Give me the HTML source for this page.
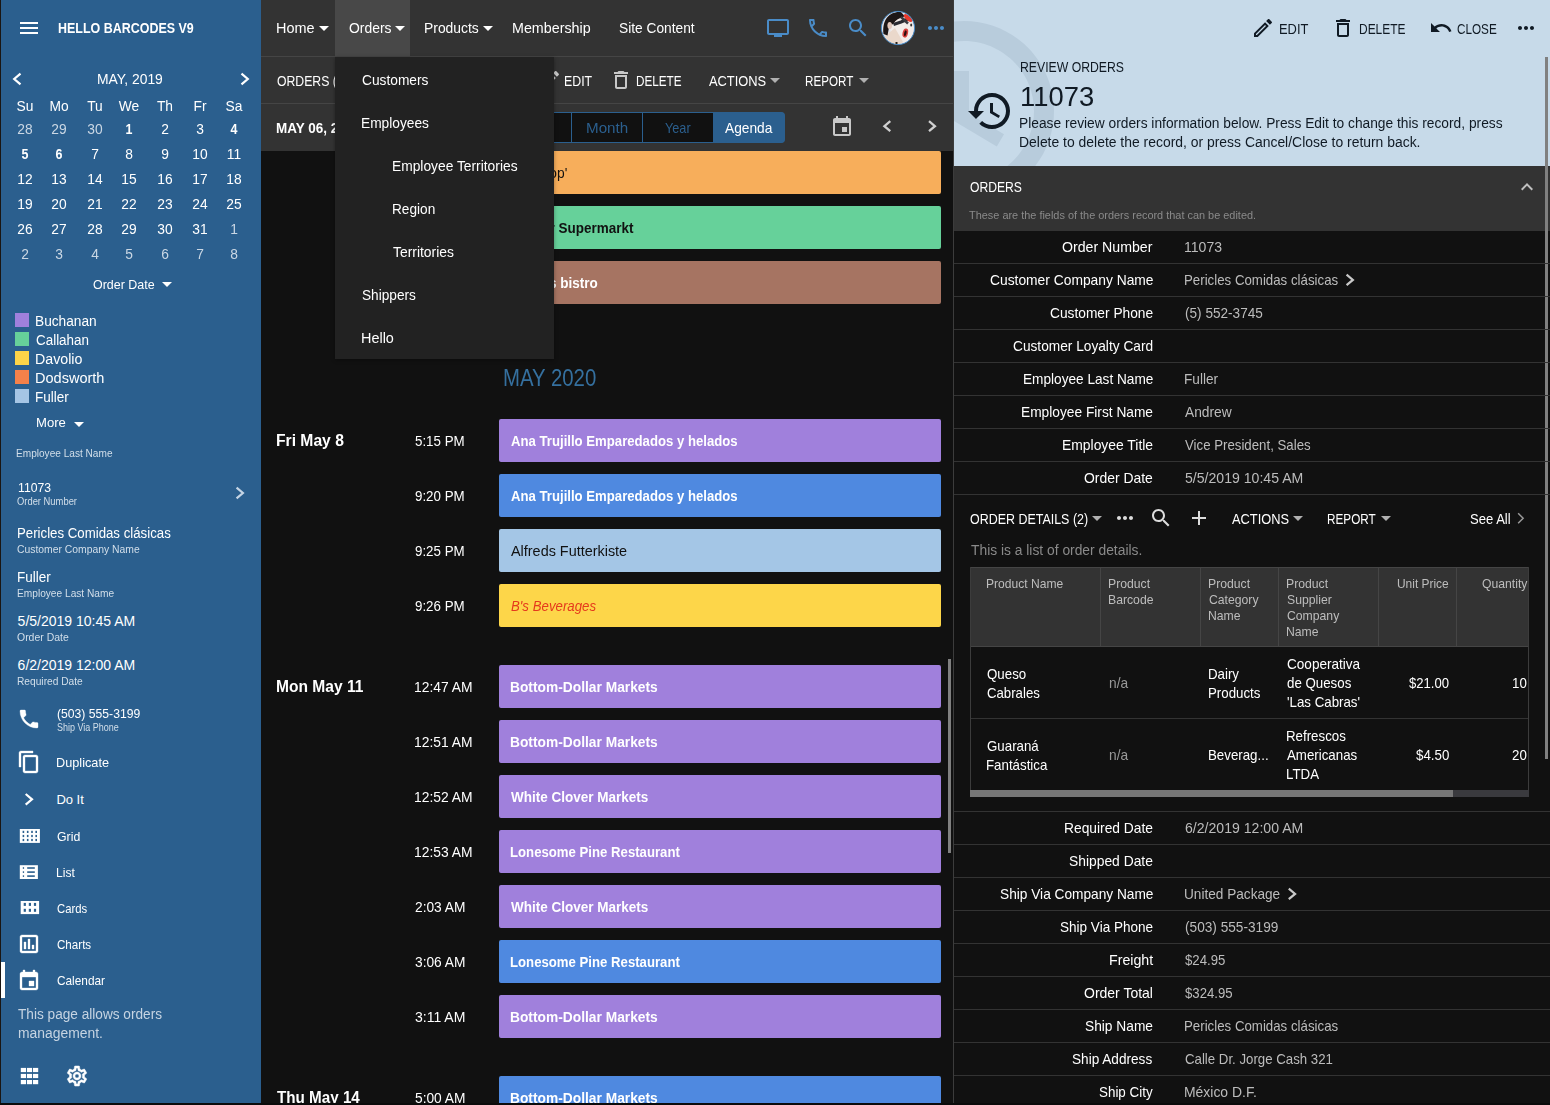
<!DOCTYPE html><html><head><meta charset="utf-8"><title>Orders</title><style>
html,body{margin:0;padding:0}
body{width:1550px;height:1105px;overflow:hidden;background:#111;position:relative;font-family:"Liberation Sans",sans-serif}
#r{position:absolute;left:0;top:0;width:1550px;height:1105px;overflow:hidden}
#r div,#r svg,#r span{position:absolute}
#r span{white-space:nowrap;line-height:20px}

</style></head><body><div id="r">
<div style="left:0px;top:0px;width:1px;height:1105px;background:#1a1512;"></div>
<div style="left:1px;top:0px;width:260px;height:1105px;background:#2b5f8e;"></div>
<div style="left:261px;top:0px;width:693px;height:151px;background:#333;"></div>
<div style="left:261px;top:56px;width:692px;height:1px;background:#454545;"></div>
<div style="left:261px;top:103px;width:692px;height:1px;background:#454545;"></div>
<div style="left:261px;top:151px;width:693px;height:954px;background:#111;"></div>
<div style="left:953px;top:0px;width:1px;height:1105px;background:#3c3c3c;"></div>
<svg style="left:17px;top:16px;" width="24" height="24" viewBox="0 0 24 24"><path fill="#fff" d="M3 18h18v-2H3v2zm0-5h18v-2H3v2zm0-7v2h18V6H3z"/></svg>
<svg style="left:9px;top:70px" width="18" height="17"><polyline points="11.51,3.70 5.21,9.00 11.51,14.30" fill="none" stroke="#fff" stroke-width="2.2" stroke-linejoin="miter"/></svg>
<svg style="left:238px;top:70px" width="18" height="17"><polyline points="3.49,3.70 9.79,9.00 3.49,14.30" fill="none" stroke="#fff" stroke-width="2.2" stroke-linejoin="miter"/></svg>
<svg style="left:155px;top:272px;" width="24" height="24" viewBox="0 0 24 24"><path fill="#fff" d="M7 10l5 5 5-5z"/></svg>
<div style="left:15px;top:313px;width:14px;height:14px;background:#a080dc;"></div>
<div style="left:15px;top:332px;width:14px;height:14px;background:#66d09a;"></div>
<div style="left:15px;top:351px;width:14px;height:14px;background:#fdd448;"></div>
<div style="left:15px;top:370px;width:14px;height:14px;background:#f4814a;"></div>
<div style="left:15px;top:389px;width:14px;height:14px;background:#a5c5e5;"></div>
<svg style="left:66.8px;top:412px;" width="24" height="24" viewBox="0 0 24 24"><path fill="#fff" d="M7 10l5 5 5-5z"/></svg>
<svg style="left:233px;top:484px" width="18" height="17"><polyline points="3.59,3.70 9.89,9.00 3.59,14.30" fill="none" stroke="#c5d5e5" stroke-width="2.2" stroke-linejoin="miter"/></svg>
<svg style="left:17px;top:707px;stroke:#fff;stroke-width:0.35px" width="24" height="24" viewBox="0 0 24 24"><path fill="#fff" d="M6.62 10.79c1.44 2.83 3.76 5.14 6.59 6.59l2.2-2.2c.27-.27.67-.36 1.02-.24 1.12.37 2.33.57 3.57.57.55 0 1 .45 1 1V20c0 .55-.45 1-1 1-9.39 0-17-7.61-17-17 0-.55.45-1 1-1h3.5c.55 0 1 .45 1 1 0 1.25.2 2.45.57 3.57.11.35.03.74-.25 1.02l-2.2 2.2z"/></svg>
<svg style="left:17px;top:750px;stroke:#fff;stroke-width:0.35px" width="24" height="24" viewBox="0 0 24 24"><path fill="#fff" d="M16 1H4c-1.1 0-2 .9-2 2v14h2V3h12V1zm3 4H8c-1.1 0-2 .9-2 2v14c0 1.1.9 2 2 2h11c1.1 0 2-.9 2-2V7c0-1.1-.9-2-2-2zm0 16H8V7h11v14z"/></svg>
<svg style="left:22px;top:791px" width="18" height="17"><polyline points="3.69,3.00 9.99,8.30 3.69,13.60" fill="none" stroke="#fff" stroke-width="2.2" stroke-linejoin="miter"/></svg>
<svg style="left:19px;top:828px" width="24" height="18"><rect x="0.8" y="1" width="20.1" height="13.9" fill="#fff"/><rect x="3.6" y="2.8" width="1.6" height="2.2" fill="#2b5f8e"/><rect x="3.6" y="6.9" width="1.6" height="2.2" fill="#2b5f8e"/><rect x="3.6" y="10.9" width="1.6" height="2.2" fill="#2b5f8e"/><rect x="7.9" y="2.8" width="1.6" height="2.2" fill="#2b5f8e"/><rect x="7.9" y="6.9" width="1.6" height="2.2" fill="#2b5f8e"/><rect x="7.9" y="10.9" width="1.6" height="2.2" fill="#2b5f8e"/><rect x="12.2" y="2.8" width="1.6" height="2.2" fill="#2b5f8e"/><rect x="12.2" y="6.9" width="1.6" height="2.2" fill="#2b5f8e"/><rect x="12.2" y="10.9" width="1.6" height="2.2" fill="#2b5f8e"/><rect x="16.4" y="2.8" width="1.6" height="2.2" fill="#2b5f8e"/><rect x="16.4" y="6.9" width="1.6" height="2.2" fill="#2b5f8e"/><rect x="16.4" y="10.9" width="1.6" height="2.2" fill="#2b5f8e"/></svg>
<svg style="left:19px;top:864px" width="24" height="18"><rect x="0.8" y="1.2" width="18.1" height="13.8" fill="#fff"/><rect x="3.8" y="3.2" width="1.3" height="1.6" fill="#2b5f8e"/><rect x="8.2" y="3.2" width="7.6" height="1.6" fill="#2b5f8e"/><rect x="3.8" y="7.3" width="1.3" height="1.6" fill="#2b5f8e"/><rect x="8.2" y="7.3" width="7.6" height="1.6" fill="#2b5f8e"/><rect x="3.8" y="11.3" width="1.3" height="1.6" fill="#2b5f8e"/><rect x="8.2" y="11.3" width="7.6" height="1.6" fill="#2b5f8e"/></svg>
<svg style="left:19px;top:899px" width="24" height="18"><rect x="1.7" y="2" width="18.4" height="13.1" fill="#fff"/><rect x="4.7" y="3.9" width="2.2" height="3" fill="#2b5f8e"/><rect x="4.7" y="9.8" width="2.2" height="3" fill="#2b5f8e"/><rect x="9.8" y="3.9" width="2.2" height="3" fill="#2b5f8e"/><rect x="9.8" y="9.8" width="2.2" height="3" fill="#2b5f8e"/><rect x="14.9" y="3.9" width="2.2" height="3" fill="#2b5f8e"/><rect x="14.9" y="9.8" width="2.2" height="3" fill="#2b5f8e"/></svg>
<svg style="left:17px;top:932px;stroke:#fff;stroke-width:0.35px" width="24" height="24" viewBox="0 0 24 24"><path fill="#fff" d="M19 3H5c-1.1 0-2 .9-2 2v14c0 1.1.9 2 2 2h14c1.1 0 2-.9 2-2V5c0-1.1-.9-2-2-2zm0 16H5V5h14v14zM7 10h2v7H7zm4-3h2v10h-2zm4 6h2v4h-2z"/></svg>
<svg style="left:17px;top:969px;stroke:#fff;stroke-width:0.35px" width="24" height="24" viewBox="0 0 24 24"><path fill="#fff" d="M17 12h-5v5h5v-5zM16 1v2H8V1H6v2H5c-1.11 0-1.99.9-1.99 2L3 19c0 1.1.89 2 2 2h14c1.1 0 2-.9 2-2V5c0-1.1-.9-2-2-2h-1V1h-2zm3 18H5V8h14v11z"/></svg>
<div style="left:1px;top:962px;width:4px;height:36px;background:#fff;"></div>
<svg style="left:18px;top:1065px" width="24" height="22"><rect x="2.8" y="2.9" width="5.2" height="4.2" fill="#fff"/><rect x="2.8" y="8.9" width="5.2" height="4.2" fill="#fff"/><rect x="2.8" y="15.0" width="5.2" height="4.2" fill="#fff"/><rect x="8.9" y="2.9" width="5.2" height="4.2" fill="#fff"/><rect x="8.9" y="8.9" width="5.2" height="4.2" fill="#fff"/><rect x="8.9" y="15.0" width="5.2" height="4.2" fill="#fff"/><rect x="15.0" y="2.9" width="5.2" height="4.2" fill="#fff"/><rect x="15.0" y="8.9" width="5.2" height="4.2" fill="#fff"/><rect x="15.0" y="15.0" width="5.2" height="4.2" fill="#fff"/></svg>
<svg style="left:65px;top:1064px;stroke:#fff;stroke-width:0.5px" width="24" height="24" viewBox="0 0 24 24"><path fill="#fff" d="M19.43 12.98c.04-.32.07-.64.07-.98 0-.34-.03-.66-.07-.98l2.11-1.65c.19-.15.24-.42.12-.64l-2-3.46c-.09-.16-.26-.25-.44-.25-.06 0-.12.01-.17.03l-2.49 1c-.52-.4-1.08-.73-1.69-.98l-.38-2.65C14.46 2.18 14.25 2 14 2h-4c-.25 0-.46.18-.49.42l-.38 2.65c-.61.25-1.17.59-1.69.98l-2.49-1c-.06-.02-.12-.03-.18-.03-.17 0-.34.09-.43.25l-2 3.46c-.13.22-.07.49.12.64l2.11 1.65c-.04.32-.07.65-.07.98 0 .33.03.66.07.98l-2.11 1.65c-.19.15-.24.42-.12.64l2 3.46c.09.16.26.25.44.25.06 0 .12-.01.17-.03l2.49-1c.52.4 1.08.73 1.69.98l.38 2.65c.03.24.24.42.49.42h4c.25 0 .46-.18.49-.42l.38-2.65c.61-.25 1.17-.59 1.69-.98l2.49 1c.06.02.12.03.18.03.17 0 .34-.09.43-.25l2-3.46c.12-.22.07-.49-.12-.64l-2.11-1.65zm-1.98-1.71c.04.31.05.52.05.73 0 .21-.02.43-.05.73l-.14 1.13.89.7 1.08.84-.7 1.21-1.27-.51-1.04-.42-.9.68c-.43.32-.84.56-1.25.73l-1.06.43-.16 1.13-.2 1.35h-1.4l-.19-1.35-.16-1.13-1.06-.43c-.43-.18-.83-.41-1.23-.71l-.91-.7-1.06.43-1.27.51-.7-1.21 1.08-.84.89-.7-.14-1.13c-.03-.31-.05-.54-.05-.74s.02-.43.05-.73l.14-1.13-.89-.7-1.08-.84.7-1.21 1.27.51 1.04.42.9-.68c.43-.32.84-.56 1.25-.73l1.06-.43.16-1.13.2-1.35h1.39l.19 1.35.16 1.13 1.06.43c.43.18.83.41 1.23.71l.91.7 1.06-.43 1.27-.51.7 1.21-1.07.85-.89.7.14 1.13zM12 8c-2.21 0-4 1.79-4 4s1.79 4 4 4 4-1.79 4-4-1.79-4-4-4zm0 6c-1.1 0-2-.9-2-2s.9-2 2-2 2 .9 2 2-.9 2-2 2z"/></svg>
<div style="left:335px;top:0px;width:75px;height:56px;background:#484848;"></div>
<svg style="left:312px;top:16px;" width="24" height="24" viewBox="0 0 24 24"><path fill="#fff" d="M7 10l5 5 5-5z"/></svg>
<svg style="left:387.8px;top:16px;" width="24" height="24" viewBox="0 0 24 24"><path fill="#fff" d="M7 10l5 5 5-5z"/></svg>
<svg style="left:475.8px;top:16px;" width="24" height="24" viewBox="0 0 24 24"><path fill="#fff" d="M7 10l5 5 5-5z"/></svg>
<svg style="left:766px;top:16px;" width="24" height="24" viewBox="0 0 24 24"><path fill="#4a8cc8" d="M21 3H3c-1.1 0-2 .9-2 2v12c0 1.1.9 2 2 2h5v2h8v-2h5c1.1 0 1.99-.9 1.99-2L23 5c0-1.1-.9-2-2-2zm0 14H3V5h18v12z"/></svg>
<svg style="left:806px;top:16px;" width="24" height="24" viewBox="0 0 24 24"><path fill="#4a8cc8" d="M6.54 5c.06.89.21 1.76.45 2.59l-1.2 1.2c-.41-1.2-.67-2.47-.76-3.79h1.51m9.86 12.02c.85.24 1.72.39 2.6.45v1.49c-1.32-.09-2.59-.35-3.8-.75l1.2-1.19M7.5 3H4c-.55 0-1 .45-1 1 0 9.39 7.61 17 17 17 .55 0 1-.45 1-1v-3.49c0-.55-.45-1-1-1-1.24 0-2.45-.2-3.57-.57-.1-.04-.21-.05-.31-.05-.26 0-.51.1-.71.29l-2.2 2.2c-2.83-1.45-5.15-3.76-6.59-6.59l2.2-2.2c.28-.28.36-.67.25-1.02C8.7 6.45 8.5 5.25 8.5 4c0-.55-.45-1-1-1z"/></svg>
<svg style="left:846px;top:16px;" width="24" height="24" viewBox="0 0 24 24"><path fill="#4a8cc8" d="M15.5 14h-.79l-.28-.27C15.41 12.59 16 11.11 16 9.5 16 5.91 13.09 3 9.5 3S3 5.91 3 9.5 5.91 16 9.5 16c1.61 0 3.09-.59 4.23-1.57l.27.28v.79l5 4.99L20.49 19l-4.99-5zm-6 0C7.01 14 5 11.99 5 9.5S7.01 5 9.5 5 14 7.01 14 9.5 11.99 14 9.5 14z"/></svg>
<svg style="left:880px;top:10px" width="36" height="36" viewBox="-1 -1 36 36"><defs><clipPath id="avc"><circle cx="17" cy="17" r="16.5"/></clipPath><filter id="avb" x="-10%" y="-10%" width="120%" height="120%"><feGaussianBlur stdDeviation="0.45"/></filter></defs><g clip-path="url(#avc)"><g filter="url(#avb)"><rect x="-1" y="-1" width="36" height="36" fill="#e3e4ea"/><ellipse cx="21" cy="18" rx="11.5" ry="13.5" fill="#f3ece9"/><path d="M4 25 L14 17 L22 31 L15 36 L5 32Z" fill="#ead8cb"/><path d="M2.500 23 C1 9 8 0 20 1 L24 5.500 C18 7 14.500 9 12.500 13 L9.500 14 C7.500 16 7.500 20 6.500 24.500 Z" fill="#1d1412"/><ellipse cx="8.700" cy="14.500" rx="2.300" ry="3.600" fill="#e2c8bc"/><path d="M12.500 13.500 L20 11 L27 8" stroke="#2b2b30" stroke-width="3.200" fill="none"/><path d="M20 6 L27 12.500" stroke="#3a3a40" stroke-width="2.400" fill="none"/><ellipse cx="27" cy="7" rx="5.200" ry="2.300" transform="rotate(42 27 7)" fill="#e73a2d"/><ellipse cx="30.200" cy="14" rx="1" ry="1.500" fill="#333"/><ellipse cx="24.300" cy="22" rx="2.700" ry="4.600" transform="rotate(14 24.300 22)" fill="#d8403c"/><ellipse cx="24.300" cy="22.300" rx="1.200" ry="3" transform="rotate(14 24.300 22.300)" fill="#2a1010"/><rect x="14.500" y="31" width="2" height="4" fill="#2a2018"/></g></g><circle cx="17" cy="17" r="16.600" fill="none" stroke="#4a8cc8" stroke-width="1"/></svg>
<svg style="left:924px;top:16px;" width="24" height="24" viewBox="0 0 24 24"><path fill="#4a8cc8" d="M6 10c-1.1 0-2 .9-2 2s.9 2 2 2 2-.9 2-2-.9-2-2-2zm12 0c-1.1 0-2 .9-2 2s.9 2 2 2 2-.9 2-2-.9-2-2-2zm-6 0c-1.1 0-2 .9-2 2s.9 2 2 2 2-.9 2-2-.9-2-2-2z"/></svg>
<svg style="left:537.9px;top:68.4px;" width="24" height="24" viewBox="0 0 24 24"><path fill="#c8c8c8" d="M14.06 9.02l.92.92L5.92 19H5v-.92l9.06-9.06M17.66 3c-.25 0-.51.1-.7.29l-1.83 1.83 3.75 3.75 1.83-1.83c.39-.39.39-1.02 0-1.41l-2.34-2.34c-.2-.2-.45-.29-.71-.29zm-3.6 3.190L3 17.25V21h3.75L17.81 9.94l-3.75-3.750z"/></svg>
<svg style="left:608.6px;top:68px;" width="24" height="24" viewBox="0 0 24 24"><path fill="#c8c8c8" d="M6 19c0 1.1.9 2 2 2h8c1.1 0 2-.9 2-2V7H6v12zM8 9h8v10H8V9zm7.5-5l-1-1h-5l-1 1H5v2h14V4z"/></svg>
<svg style="left:763.4px;top:68px;" width="24" height="24" viewBox="0 0 24 24"><path fill="#b0b0b0" d="M7 10l5 5 5-5z"/></svg>
<svg style="left:851.6px;top:68px;" width="24" height="24" viewBox="0 0 24 24"><path fill="#b0b0b0" d="M7 10l5 5 5-5z"/></svg>
<div style="left:429.5px;top:112px;width:355.5px;height:31px;box-sizing:border-box;border:1px solid #2b5f8e;border-radius:4px;background:#111"></div>
<div style="left:500px;top:112px;width:1px;height:31px;background:#2b5f8e;"></div>
<div style="left:571px;top:112px;width:1px;height:31px;background:#2b5f8e;"></div>
<div style="left:642px;top:112px;width:1px;height:31px;background:#2b5f8e;"></div>
<div style="left:713px;top:112px;width:72px;height:31px;background:#2b5f8e;border-radius:0 4px 4px 0"></div>
<svg style="left:829.6px;top:115px;" width="24" height="24" viewBox="0 0 24 24"><path fill="#c8c8c8" d="M17 12h-5v5h5v-5zM16 1v2H8V1H6v2H5c-1.11 0-1.99.9-1.99 2L3 19c0 1.1.89 2 2 2h14c1.1 0 2-.9 2-2V5c0-1.1-.9-2-2-2h-1V1h-2zm3 18H5V8h14v11z"/></svg>
<svg style="left:879px;top:118px" width="18" height="17"><polyline points="11.28,3.20 5.38,8.20 11.28,13.20" fill="none" stroke="#d0d0d0" stroke-width="2.3" stroke-linejoin="miter"/></svg>
<svg style="left:926px;top:118px" width="18" height="17"><polyline points="3.02,3.20 8.92,8.20 3.02,13.20" fill="none" stroke="#d0d0d0" stroke-width="2.3" stroke-linejoin="miter"/></svg>
<div style="left:499px;top:151px;width:442px;height:43px;background:#f7ae5b;border-radius:2px"></div>
<div style="left:499px;top:206px;width:442px;height:43px;background:#66d19a;border-radius:2px"></div>
<div style="left:499px;top:261px;width:442px;height:43px;background:#a67462;border-radius:2px"></div>
<div style="left:499px;top:419px;width:442px;height:43px;background:#a080dc;border-radius:2px"></div>
<div style="left:499px;top:474px;width:442px;height:43px;background:#4f89e0;border-radius:2px"></div>
<div style="left:499px;top:529px;width:442px;height:43px;background:#a4c6e6;border-radius:2px"></div>
<div style="left:499px;top:584px;width:442px;height:43px;background:#fdd649;border-radius:2px"></div>
<div style="left:499px;top:665px;width:442px;height:43px;background:#a080dc;border-radius:2px"></div>
<div style="left:499px;top:720px;width:442px;height:43px;background:#a080dc;border-radius:2px"></div>
<div style="left:499px;top:775px;width:442px;height:43px;background:#a080dc;border-radius:2px"></div>
<div style="left:499px;top:830px;width:442px;height:43px;background:#a080dc;border-radius:2px"></div>
<div style="left:499px;top:885px;width:442px;height:43px;background:#a080dc;border-radius:2px"></div>
<div style="left:499px;top:940px;width:442px;height:43px;background:#4f89e0;border-radius:2px"></div>
<div style="left:499px;top:995px;width:442px;height:43px;background:#a080dc;border-radius:2px"></div>
<div style="left:499px;top:1076px;width:442px;height:43px;background:#4f89e0;border-radius:2px"></div>
<div style="left:948px;top:659px;width:3px;height:194px;background:#808080;"></div>
<div style="left:954px;top:0;width:596px;height:166px;background:#c7dae9;overflow:hidden"><svg style="left:-120px;top:-9px" width="240" height="240" viewBox="0 0 24 24"><path fill="#b8ccdc" d="M13 3c-4.97 0-9 4.03-9 9H1l3.89 3.89.07.14L9 12H6c0-3.870 3.130-7 7-7s7 3.130 7 7-3.130 7-7 7c-1.930 0-3.680-.79-4.940-2.060l-1.420 1.420C8.270 19.990 10.510 21 13 21c4.970 0 9-4.030 9-9s-4.030-9-9-9zm-1 5v5l4.280 2.540.72-1.210-3.500-2.080V8H12z"/></svg></div>
<div style="left:954px;top:166px;width:596px;height:65px;background:#333;"></div>
<svg style="left:1250.6px;top:16px;" width="24" height="24" viewBox="0 0 24 24"><path fill="#101a24" d="M14.06 9.02l.92.92L5.92 19H5v-.92l9.06-9.06M17.66 3c-.25 0-.51.1-.7.29l-1.83 1.83 3.75 3.75 1.83-1.83c.39-.39.39-1.02 0-1.41l-2.34-2.34c-.2-.2-.45-.29-.71-.29zm-3.6 3.190L3 17.25V21h3.75L17.81 9.94l-3.75-3.750z"/></svg>
<svg style="left:1331.4px;top:16px;" width="24" height="24" viewBox="0 0 24 24"><path fill="#101a24" d="M6 19c0 1.1.9 2 2 2h8c1.1 0 2-.9 2-2V7H6v12zM8 9h8v10H8V9zm7.5-5l-1-1h-5l-1 1H5v2h14V4z"/></svg>
<svg style="left:1428.6px;top:16.2px;" width="24" height="24" viewBox="0 0 24 24"><path fill="#101a24" d="M12.5 8c-2.65 0-5.05.99-6.9 2.6L2 7v9h9l-3.62-3.62c1.39-1.16 3.16-1.88 5.12-1.88 3.54 0 6.55 2.31 7.6 5.5l2.37-.78C21.08 11.03 17.15 8 12.5 8z"/></svg>
<svg style="left:1514px;top:16px;" width="24" height="24" viewBox="0 0 24 24"><path fill="#101a24" d="M6 10c-1.1 0-2 .9-2 2s.9 2 2 2 2-.9 2-2-.9-2-2-2zm12 0c-1.1 0-2 .9-2 2s.9 2 2 2 2-.9 2-2-.9-2-2-2zm-6 0c-1.1 0-2 .9-2 2s.9 2 2 2 2-.9 2-2-.9-2-2-2z"/></svg>
<svg style="left:966.4px;top:87px;" width="48" height="48" viewBox="0 0 24 24"><path fill="#101a24" d="M13 3c-4.97 0-9 4.03-9 9H1l3.89 3.89.07.14L9 12H6c0-3.870 3.130-7 7-7s7 3.130 7 7-3.130 7-7 7c-1.930 0-3.680-.79-4.940-2.060l-1.420 1.420C8.270 19.990 10.510 21 13 21c4.970 0 9-4.030 9-9s-4.030-9-9-9zm-1 5v5l4.280 2.540.72-1.210-3.500-2.080V8H12z"/></svg>
<svg style="left:1515px;top:175px;" width="24" height="24" viewBox="0 0 24 24"><path fill="#c0c0c0" d="M12 8l-6 6 1.41 1.41L12 10.83l4.590 4.580L18 14z"/></svg>
<div style="left:1545px;top:57px;width:3px;height:702px;background:#808080;"></div>
<div style="left:954px;top:263px;width:596px;height:1px;background:#333;"></div>
<svg style="left:1343px;top:271px" width="18" height="17"><polyline points="3.59,3.60 9.89,8.90 3.59,14.20" fill="none" stroke="#c8c8c8" stroke-width="2.2" stroke-linejoin="miter"/></svg>
<div style="left:954px;top:296px;width:596px;height:1px;background:#333;"></div>
<div style="left:954px;top:329px;width:596px;height:1px;background:#333;"></div>
<div style="left:954px;top:362px;width:596px;height:1px;background:#333;"></div>
<div style="left:954px;top:395px;width:596px;height:1px;background:#333;"></div>
<div style="left:954px;top:428px;width:596px;height:1px;background:#333;"></div>
<div style="left:954px;top:461px;width:596px;height:1px;background:#333;"></div>
<div style="left:954px;top:494px;width:596px;height:1px;background:#333;"></div>
<div style="left:954px;top:811px;width:596px;height:1px;background:#333;"></div>
<div style="left:954px;top:844px;width:596px;height:1px;background:#333;"></div>
<svg style="left:1285px;top:885px" width="18" height="17"><polyline points="3.79,3.60 10.09,8.90 3.79,14.20" fill="none" stroke="#c8c8c8" stroke-width="2.2" stroke-linejoin="miter"/></svg>
<div style="left:954px;top:877px;width:596px;height:1px;background:#333;"></div>
<div style="left:954px;top:910px;width:596px;height:1px;background:#333;"></div>
<div style="left:954px;top:943px;width:596px;height:1px;background:#333;"></div>
<div style="left:954px;top:976px;width:596px;height:1px;background:#333;"></div>
<div style="left:954px;top:1009px;width:596px;height:1px;background:#333;"></div>
<div style="left:954px;top:1042px;width:596px;height:1px;background:#333;"></div>
<div style="left:954px;top:1075px;width:596px;height:1px;background:#333;"></div>
<svg style="left:1084.6px;top:506px;" width="24" height="24" viewBox="0 0 24 24"><path fill="#b0b0b0" d="M7 10l5 5 5-5z"/></svg>
<svg style="left:1112.5px;top:506.4px;" width="24" height="24" viewBox="0 0 24 24"><path fill="#dcdcdc" d="M6 10c-1.1 0-2 .9-2 2s.9 2 2 2 2-.9 2-2-.9-2-2-2zm12 0c-1.1 0-2 .9-2 2s.9 2 2 2 2-.9 2-2-.9-2-2-2zm-6 0c-1.1 0-2 .9-2 2s.9 2 2 2 2-.9 2-2-.9-2-2-2z"/></svg>
<svg style="left:1148.6px;top:506px;" width="24" height="24" viewBox="0 0 24 24"><path fill="#dcdcdc" d="M15.5 14h-.79l-.28-.27C15.41 12.59 16 11.11 16 9.5 16 5.91 13.09 3 9.5 3S3 5.91 3 9.5 5.91 16 9.5 16c1.61 0 3.09-.59 4.23-1.57l.27.28v.79l5 4.99L20.49 19l-4.99-5zm-6 0C7.01 14 5 11.99 5 9.5S7.01 5 9.5 5 14 7.01 14 9.5 11.99 14 9.5 14z"/></svg>
<svg style="left:1186.6px;top:506.4px;" width="24" height="24" viewBox="0 0 24 24"><path fill="#dcdcdc" d="M19 13h-6v6h-2v-6H5v-2h6V5h2v6h6v2z"/></svg>
<svg style="left:1286px;top:506px;" width="24" height="24" viewBox="0 0 24 24"><path fill="#b0b0b0" d="M7 10l5 5 5-5z"/></svg>
<svg style="left:1374px;top:506px;" width="24" height="24" viewBox="0 0 24 24"><path fill="#b0b0b0" d="M7 10l5 5 5-5z"/></svg>
<svg style="left:1515px;top:510px" width="18" height="17"><polyline points="3.14,3.30 8.14,8.30 3.14,13.30" fill="none" stroke="#999" stroke-width="1.5" stroke-linejoin="miter"/></svg>
<div style="left:970px;top:567px;width:558px;height:80px;background:#333;"></div>
<div style="left:970px;top:567px;width:558px;height:1px;background:#454545;"></div>
<div style="left:970px;top:646px;width:558px;height:1px;background:#454545;"></div>
<div style="left:970px;top:567px;width:1px;height:230px;background:#3c3c3c;"></div>
<div style="left:1528px;top:567px;width:1px;height:230px;background:#3c3c3c;"></div>
<div style="left:1100px;top:568px;width:1px;height:78px;background:#454545;"></div>
<div style="left:1200px;top:568px;width:1px;height:78px;background:#454545;"></div>
<div style="left:1278px;top:568px;width:1px;height:78px;background:#454545;"></div>
<div style="left:1378px;top:568px;width:1px;height:78px;background:#454545;"></div>
<div style="left:1456px;top:568px;width:1px;height:78px;background:#454545;"></div>
<div style="left:971px;top:718px;width:557px;height:1px;background:#333;"></div>
<div style="left:970px;top:790px;width:559px;height:7px;background:#3a3a3e;"></div>
<div style="left:970px;top:790px;width:483px;height:7px;background:#777;"></div>
<span style="top:18px;font-size:14px;color:#fff;font-weight:700;left:57.50px;transform:scaleX(0.8901);transform-origin:0 0;">HELLO BARCODES V9</span>
<span style="top:69px;font-size:14.5px;color:#fff;left:97.44px;transform:scaleX(0.9568);transform-origin:0 0;">MAY, 2019</span>
<span style="top:96px;font-size:14px;color:#fff;left:-25.3px;width:100px;text-align:center;transform:scaleX(0.9856);transform-origin:50% 0;">Su</span>
<span style="top:96px;font-size:14px;color:#fff;left:9.399999999999999px;width:100px;text-align:center;transform:scaleX(0.9856);transform-origin:50% 0;">Mo</span>
<span style="top:96px;font-size:14px;color:#fff;left:44.599999999999994px;width:100px;text-align:center;transform:scaleX(0.9856);transform-origin:50% 0;">Tu</span>
<span style="top:96px;font-size:14px;color:#fff;left:79.30000000000001px;width:100px;text-align:center;transform:scaleX(0.9856);transform-origin:50% 0;">We</span>
<span style="top:96px;font-size:14px;color:#fff;left:114.5px;width:100px;text-align:center;transform:scaleX(0.9856);transform-origin:50% 0;">Th</span>
<span style="top:96px;font-size:14px;color:#fff;left:149.7px;width:100px;text-align:center;transform:scaleX(0.9856);transform-origin:50% 0;">Fr</span>
<span style="top:96px;font-size:14px;color:#fff;left:184.3px;width:100px;text-align:center;transform:scaleX(0.9856);transform-origin:50% 0;">Sa</span>
<span style="top:119px;font-size:14px;color:#cad7e4;left:-25.3px;width:100px;text-align:center;transform:scaleX(0.9856);transform-origin:50% 0;">28</span>
<span style="top:119px;font-size:14px;color:#cad7e4;left:9.399999999999999px;width:100px;text-align:center;transform:scaleX(0.9856);transform-origin:50% 0;">29</span>
<span style="top:119px;font-size:14px;color:#cad7e4;left:44.599999999999994px;width:100px;text-align:center;transform:scaleX(0.9856);transform-origin:50% 0;">30</span>
<span style="top:119px;font-size:14px;color:#fff;font-weight:700;left:79.30000000000001px;width:100px;text-align:center;transform:scaleX(0.8901);transform-origin:50% 0;">1</span>
<span style="top:119px;font-size:14px;color:#fff;left:114.5px;width:100px;text-align:center;transform:scaleX(0.9856);transform-origin:50% 0;">2</span>
<span style="top:119px;font-size:14px;color:#fff;left:149.7px;width:100px;text-align:center;transform:scaleX(0.9856);transform-origin:50% 0;">3</span>
<span style="top:119px;font-size:14px;color:#fff;font-weight:700;left:184.3px;width:100px;text-align:center;transform:scaleX(0.8901);transform-origin:50% 0;">4</span>
<span style="top:144px;font-size:14px;color:#fff;font-weight:700;left:-25.3px;width:100px;text-align:center;transform:scaleX(0.8901);transform-origin:50% 0;">5</span>
<span style="top:144px;font-size:14px;color:#fff;font-weight:700;left:9.399999999999999px;width:100px;text-align:center;transform:scaleX(0.8901);transform-origin:50% 0;">6</span>
<span style="top:144px;font-size:14px;color:#fff;left:44.599999999999994px;width:100px;text-align:center;transform:scaleX(0.9856);transform-origin:50% 0;">7</span>
<span style="top:144px;font-size:14px;color:#fff;left:79.30000000000001px;width:100px;text-align:center;transform:scaleX(0.9856);transform-origin:50% 0;">8</span>
<span style="top:144px;font-size:14px;color:#fff;left:114.5px;width:100px;text-align:center;transform:scaleX(0.9856);transform-origin:50% 0;">9</span>
<span style="top:144px;font-size:14px;color:#fff;left:149.7px;width:100px;text-align:center;transform:scaleX(0.9856);transform-origin:50% 0;">10</span>
<span style="top:144px;font-size:14px;color:#fff;left:184.3px;width:100px;text-align:center;transform:scaleX(0.9856);transform-origin:50% 0;">11</span>
<span style="top:169px;font-size:14px;color:#fff;left:-25.3px;width:100px;text-align:center;transform:scaleX(0.9856);transform-origin:50% 0;">12</span>
<span style="top:169px;font-size:14px;color:#fff;left:9.399999999999999px;width:100px;text-align:center;transform:scaleX(0.9856);transform-origin:50% 0;">13</span>
<span style="top:169px;font-size:14px;color:#fff;left:44.599999999999994px;width:100px;text-align:center;transform:scaleX(0.9856);transform-origin:50% 0;">14</span>
<span style="top:169px;font-size:14px;color:#fff;left:79.30000000000001px;width:100px;text-align:center;transform:scaleX(0.9856);transform-origin:50% 0;">15</span>
<span style="top:169px;font-size:14px;color:#fff;left:114.5px;width:100px;text-align:center;transform:scaleX(0.9856);transform-origin:50% 0;">16</span>
<span style="top:169px;font-size:14px;color:#fff;left:149.7px;width:100px;text-align:center;transform:scaleX(0.9856);transform-origin:50% 0;">17</span>
<span style="top:169px;font-size:14px;color:#fff;left:184.3px;width:100px;text-align:center;transform:scaleX(0.9856);transform-origin:50% 0;">18</span>
<span style="top:194px;font-size:14px;color:#fff;left:-25.3px;width:100px;text-align:center;transform:scaleX(0.9856);transform-origin:50% 0;">19</span>
<span style="top:194px;font-size:14px;color:#fff;left:9.399999999999999px;width:100px;text-align:center;transform:scaleX(0.9856);transform-origin:50% 0;">20</span>
<span style="top:194px;font-size:14px;color:#fff;left:44.599999999999994px;width:100px;text-align:center;transform:scaleX(0.9856);transform-origin:50% 0;">21</span>
<span style="top:194px;font-size:14px;color:#fff;left:79.30000000000001px;width:100px;text-align:center;transform:scaleX(0.9856);transform-origin:50% 0;">22</span>
<span style="top:194px;font-size:14px;color:#fff;left:114.5px;width:100px;text-align:center;transform:scaleX(0.9856);transform-origin:50% 0;">23</span>
<span style="top:194px;font-size:14px;color:#fff;left:149.7px;width:100px;text-align:center;transform:scaleX(0.9856);transform-origin:50% 0;">24</span>
<span style="top:194px;font-size:14px;color:#fff;left:184.3px;width:100px;text-align:center;transform:scaleX(0.9856);transform-origin:50% 0;">25</span>
<span style="top:219px;font-size:14px;color:#fff;left:-25.3px;width:100px;text-align:center;transform:scaleX(0.9856);transform-origin:50% 0;">26</span>
<span style="top:219px;font-size:14px;color:#fff;left:9.399999999999999px;width:100px;text-align:center;transform:scaleX(0.9856);transform-origin:50% 0;">27</span>
<span style="top:219px;font-size:14px;color:#fff;left:44.599999999999994px;width:100px;text-align:center;transform:scaleX(0.9856);transform-origin:50% 0;">28</span>
<span style="top:219px;font-size:14px;color:#fff;left:79.30000000000001px;width:100px;text-align:center;transform:scaleX(0.9856);transform-origin:50% 0;">29</span>
<span style="top:219px;font-size:14px;color:#fff;left:114.5px;width:100px;text-align:center;transform:scaleX(0.9856);transform-origin:50% 0;">30</span>
<span style="top:219px;font-size:14px;color:#fff;left:149.7px;width:100px;text-align:center;transform:scaleX(0.9856);transform-origin:50% 0;">31</span>
<span style="top:219px;font-size:14px;color:#cad7e4;left:184.3px;width:100px;text-align:center;transform:scaleX(0.9856);transform-origin:50% 0;">1</span>
<span style="top:244px;font-size:14px;color:#cad7e4;left:-25.3px;width:100px;text-align:center;transform:scaleX(0.9856);transform-origin:50% 0;">2</span>
<span style="top:244px;font-size:14px;color:#cad7e4;left:9.399999999999999px;width:100px;text-align:center;transform:scaleX(0.9856);transform-origin:50% 0;">3</span>
<span style="top:244px;font-size:14px;color:#cad7e4;left:44.599999999999994px;width:100px;text-align:center;transform:scaleX(0.9856);transform-origin:50% 0;">4</span>
<span style="top:244px;font-size:14px;color:#cad7e4;left:79.30000000000001px;width:100px;text-align:center;transform:scaleX(0.9856);transform-origin:50% 0;">5</span>
<span style="top:244px;font-size:14px;color:#cad7e4;left:114.5px;width:100px;text-align:center;transform:scaleX(0.9856);transform-origin:50% 0;">6</span>
<span style="top:244px;font-size:14px;color:#cad7e4;left:149.7px;width:100px;text-align:center;transform:scaleX(0.9856);transform-origin:50% 0;">7</span>
<span style="top:244px;font-size:14px;color:#cad7e4;left:184.3px;width:100px;text-align:center;transform:scaleX(0.9856);transform-origin:50% 0;">8</span>
<span style="top:275px;font-size:13px;color:#fff;left:93.00px;transform:scaleX(0.9583);transform-origin:0 0;">Order Date</span>
<span style="top:311px;font-size:14px;color:#fff;left:35.42px;transform:scaleX(0.9793);transform-origin:0 0;">Buchanan</span>
<span style="top:330px;font-size:14px;color:#fff;left:36.40px;transform:scaleX(0.9582);transform-origin:0 0;">Callahan</span>
<span style="top:349px;font-size:14px;color:#fff;left:35.38px;transform:scaleX(1.0152);transform-origin:0 0;">Davolio</span>
<span style="top:368px;font-size:14px;color:#fff;left:35.36px;transform:scaleX(1.0379);transform-origin:0 0;">Dodsworth</span>
<span style="top:387px;font-size:14px;color:#fff;left:35.43px;transform:scaleX(0.9667);transform-origin:0 0;">Fuller</span>
<span style="top:413px;font-size:13px;color:#fff;left:36.39px;transform:scaleX(1.0075);transform-origin:0 0;">More</span>
<span style="top:443px;font-size:11px;color:#d3dfea;left:15.60px;transform:scaleX(0.9177);transform-origin:0 0;">Employee Last Name</span>
<span style="top:478px;font-size:13px;color:#fff;left:17.60px;transform:scaleX(0.9383);transform-origin:0 0;">11073</span>
<span style="top:492px;font-size:10px;color:#d3dfea;left:17.00px;transform:scaleX(0.9384);transform-origin:0 0;">Order Number</span>
<span style="top:523px;font-size:14px;color:#fff;left:16.65px;transform:scaleX(0.9455);transform-origin:0 0;">Pericles Comidas clásicas</span>
<span style="top:539px;font-size:11px;color:#d3dfea;left:17.00px;transform:scaleX(0.9424);transform-origin:0 0;">Customer Company Name</span>
<span style="top:567px;font-size:14px;color:#fff;left:16.63px;transform:scaleX(0.9667);transform-origin:0 0;">Fuller</span>
<span style="top:583px;font-size:11px;color:#d3dfea;left:17.00px;transform:scaleX(0.9234);transform-origin:0 0;">Employee Last Name</span>
<span style="top:611px;font-size:14px;color:#fff;left:17.60px;">5/5/2019 10:45 AM</span>
<span style="top:627px;font-size:11px;color:#d3dfea;left:17.00px;transform:scaleX(0.9504);transform-origin:0 0;">Order Date</span>
<span style="top:655px;font-size:14px;color:#fff;left:17.60px;">6/2/2019 12:00 AM</span>
<span style="top:671px;font-size:11px;color:#d3dfea;left:17.40px;transform:scaleX(0.9264);transform-origin:0 0;">Required Date</span>
<span style="top:704px;font-size:13px;color:#fff;left:57.40px;transform:scaleX(0.9361);transform-origin:0 0;">(503) 555-3199</span>
<span style="top:718px;font-size:10px;color:#d3dfea;left:57.00px;transform:scaleX(0.8989);transform-origin:0 0;">Ship Via Phone</span>
<span style="top:753px;font-size:13px;color:#fff;left:56.42px;transform:scaleX(0.9780);transform-origin:0 0;">Duplicate</span>
<span style="top:790px;font-size:13px;color:#fff;left:56.40px;">Do It</span>
<span style="top:827px;font-size:13px;color:#fff;left:57.40px;transform:scaleX(0.9454);transform-origin:0 0;">Grid</span>
<span style="top:863px;font-size:13px;color:#fff;left:56.47px;transform:scaleX(0.9277);transform-origin:0 0;">List</span>
<span style="top:899px;font-size:13px;color:#fff;left:57.40px;transform:scaleX(0.8699);transform-origin:0 0;">Cards</span>
<span style="top:935px;font-size:13px;color:#fff;left:57.40px;transform:scaleX(0.8920);transform-origin:0 0;">Charts</span>
<span style="top:971px;font-size:13px;color:#fff;left:57.40px;transform:scaleX(0.9097);transform-origin:0 0;">Calendar</span>
<span style="top:1004px;font-size:14px;color:#c6d4e2;left:17.60px;transform:scaleX(0.9740);transform-origin:0 0;">This page allows orders</span>
<span style="top:1023px;font-size:14px;color:#c6d4e2;left:17.60px;transform:scaleX(0.9915);transform-origin:0 0;">management.</span>
<span style="top:18px;font-size:15px;color:#fff;left:276.44px;transform:scaleX(0.9620);transform-origin:0 0;">Home</span>
<span style="top:18px;font-size:15px;color:#fff;left:348.60px;transform:scaleX(0.9263);transform-origin:0 0;">Orders</span>
<span style="top:18px;font-size:15px;color:#fff;left:423.67px;transform:scaleX(0.9256);transform-origin:0 0;">Products</span>
<span style="top:18px;font-size:15px;color:#fff;left:512.05px;transform:scaleX(0.9534);transform-origin:0 0;">Membership</span>
<span style="top:18px;font-size:15px;color:#fff;left:618.60px;transform:scaleX(0.9162);transform-origin:0 0;">Site Content</span>
<span style="top:71px;font-size:14.5px;color:#fff;left:277.00px;transform:scaleX(0.8443);transform-origin:0 0;">ORDERS (</span>
<span style="top:71px;font-size:14.5px;color:#fff;left:564.15px;transform:scaleX(0.8517);transform-origin:0 0;">EDIT</span>
<span style="top:71px;font-size:14.5px;color:#fff;left:635.79px;transform:scaleX(0.8074);transform-origin:0 0;">DELETE</span>
<span style="top:71px;font-size:14.5px;color:#fff;left:709.40px;transform:scaleX(0.8874);transform-origin:0 0;">ACTIONS</span>
<span style="top:71px;font-size:14.5px;color:#fff;left:805.00px;transform:scaleX(0.8027);transform-origin:0 0;">REPORT</span>
<span style="top:118px;font-size:15px;color:#fff;font-weight:700;left:276.10px;transform:scaleX(0.8986);transform-origin:0 0;">MAY 06, 2019</span>
<span style="top:118px;font-size:15px;color:#2b5f8e;left:450.08px;transform:scaleX(0.9203);transform-origin:0 0;">Day</span>
<span style="top:118px;font-size:15px;color:#2b5f8e;left:517.00px;transform:scaleX(0.9203);transform-origin:0 0;">Week</span>
<span style="top:118px;font-size:15px;color:#2b5f8e;left:585.59px;transform:scaleX(1.0112);transform-origin:0 0;">Month</span>
<span style="top:118px;font-size:15px;color:#2b5f8e;left:665.00px;transform:scaleX(0.8445);transform-origin:0 0;">Year</span>
<span style="top:118px;font-size:15px;color:#fff;left:725.00px;transform:scaleX(0.9165);transform-origin:0 0;">Agenda</span>
<span style="top:163px;font-size:15px;color:#111;right:983.13px;transform:scaleX(0.9203);transform-origin:100% 0;">Let's Stop N Shop'</span>
<span style="top:218px;font-size:15px;color:#111;font-weight:700;right:916.50px;transform:scaleX(0.8986);transform-origin:100% 0;">Lehmanner Supermarkt</span>
<span style="top:273px;font-size:15px;color:#fff;font-weight:700;right:952.45px;transform:scaleX(0.8986);transform-origin:100% 0;">Bon app's bistro</span>
<span style="top:368px;font-size:23px;color:#35709f;left:503.11px;transform:scaleX(0.8855);transform-origin:0 0;">MAY 2020</span>
<span style="top:431px;font-size:16px;color:#fff;font-weight:700;left:276.42px;transform:scaleX(0.9787);transform-origin:0 0;">Fri May 8</span>
<span style="top:431px;font-size:15px;color:#fff;font-weight:700;left:511.00px;transform:scaleX(0.8773);transform-origin:0 0;">Ana Trujillo Emparedados y helados</span>
<span style="top:431px;font-size:15px;color:#fff;left:415.30px;transform:scaleX(0.8886);transform-origin:0 0;">5:15 PM</span>
<span style="top:486px;font-size:15px;color:#fff;font-weight:700;left:511.00px;transform:scaleX(0.8773);transform-origin:0 0;">Ana Trujillo Emparedados y helados</span>
<span style="top:486px;font-size:15px;color:#fff;left:415.30px;transform:scaleX(0.8886);transform-origin:0 0;">9:20 PM</span>
<span style="top:541px;font-size:15px;color:#111;left:511.00px;transform:scaleX(0.9608);transform-origin:0 0;">Alfreds Futterkiste</span>
<span style="top:541px;font-size:15px;color:#fff;left:415.30px;transform:scaleX(0.8886);transform-origin:0 0;">9:25 PM</span>
<span style="top:596px;font-size:15px;color:#e5391c;font-style:italic;left:511.00px;transform:scaleX(0.8837);transform-origin:0 0;">B's Beverages</span>
<span style="top:596px;font-size:15px;color:#fff;left:415.30px;transform:scaleX(0.8886);transform-origin:0 0;">9:26 PM</span>
<span style="top:677px;font-size:16px;color:#fff;font-weight:700;left:276.43px;transform:scaleX(0.9729);transform-origin:0 0;">Mon May 11</span>
<span style="top:677px;font-size:15px;color:#fff;font-weight:700;left:510.08px;transform:scaleX(0.9184);transform-origin:0 0;">Bottom-Dollar Markets</span>
<span style="top:677px;font-size:15px;color:#fff;left:414.38px;transform:scaleX(0.9233);transform-origin:0 0;">12:47 AM</span>
<span style="top:732px;font-size:15px;color:#fff;font-weight:700;left:510.08px;transform:scaleX(0.9184);transform-origin:0 0;">Bottom-Dollar Markets</span>
<span style="top:732px;font-size:15px;color:#fff;left:414.38px;transform:scaleX(0.9233);transform-origin:0 0;">12:51 AM</span>
<span style="top:787px;font-size:15px;color:#fff;font-weight:700;left:511.00px;transform:scaleX(0.9001);transform-origin:0 0;">White Clover Markets</span>
<span style="top:787px;font-size:15px;color:#fff;left:414.38px;transform:scaleX(0.9233);transform-origin:0 0;">12:52 AM</span>
<span style="top:842px;font-size:15px;color:#fff;font-weight:700;left:510.12px;transform:scaleX(0.8784);transform-origin:0 0;">Lonesome Pine Restaurant</span>
<span style="top:842px;font-size:15px;color:#fff;left:414.38px;transform:scaleX(0.9233);transform-origin:0 0;">12:53 AM</span>
<span style="top:897px;font-size:15px;color:#fff;font-weight:700;left:511.00px;transform:scaleX(0.9001);transform-origin:0 0;">White Clover Markets</span>
<span style="top:897px;font-size:15px;color:#fff;left:415.30px;transform:scaleX(0.9157);transform-origin:0 0;">2:03 AM</span>
<span style="top:952px;font-size:15px;color:#fff;font-weight:700;left:510.12px;transform:scaleX(0.8784);transform-origin:0 0;">Lonesome Pine Restaurant</span>
<span style="top:952px;font-size:15px;color:#fff;left:415.30px;transform:scaleX(0.9157);transform-origin:0 0;">3:06 AM</span>
<span style="top:1007px;font-size:15px;color:#fff;font-weight:700;left:510.08px;transform:scaleX(0.9184);transform-origin:0 0;">Bottom-Dollar Markets</span>
<span style="top:1007px;font-size:15px;color:#fff;left:415.30px;transform:scaleX(0.9345);transform-origin:0 0;">3:11 AM</span>
<span style="top:1088px;font-size:16px;color:#fff;font-weight:700;left:277.40px;transform:scaleX(0.9503);transform-origin:0 0;">Thu May 14</span>
<span style="top:1088px;font-size:15px;color:#fff;font-weight:700;left:510.08px;transform:scaleX(0.9184);transform-origin:0 0;">Bottom-Dollar Markets</span>
<span style="top:1088px;font-size:15px;color:#fff;left:415.30px;transform:scaleX(0.9157);transform-origin:0 0;">5:00 AM</span>
<span style="top:19px;font-size:14.5px;color:#101a24;left:1278.51px;transform:scaleX(0.8890);transform-origin:0 0;">EDIT</span>
<span style="top:19px;font-size:14.5px;color:#101a24;left:1358.77px;transform:scaleX(0.8253);transform-origin:0 0;">DELETE</span>
<span style="top:19px;font-size:14.5px;color:#101a24;left:1457.00px;transform:scaleX(0.8083);transform-origin:0 0;">CLOSE</span>
<span style="top:57px;font-size:14.5px;color:#101a24;left:1019.56px;transform:scaleX(0.8438);transform-origin:0 0;">REVIEW ORDERS</span>
<span style="top:87px;font-size:28px;color:#101a24;left:1020.04px;transform:scaleX(0.9780);transform-origin:0 0;">11073</span>
<span style="top:113px;font-size:14px;color:#101a24;left:1019.42px;transform:scaleX(0.9833);transform-origin:0 0;">Please review orders information below. Press Edit to change this record, press</span>
<span style="top:132px;font-size:14px;color:#101a24;left:1019.41px;transform:scaleX(0.9941);transform-origin:0 0;">Delete to delete the record, or press Cancel/Close to return back.</span>
<span style="top:177px;font-size:14.5px;color:#fff;left:970.00px;transform:scaleX(0.8376);transform-origin:0 0;">ORDERS</span>
<span style="top:205px;font-size:11px;color:#8a8a8a;left:969.00px;transform:scaleX(0.9925);transform-origin:0 0;">These are the fields of the orders record that can be edited.</span>
<span style="top:237px;font-size:14.5px;color:#fff;left:1062.40px;transform:scaleX(0.9759);transform-origin:0 0;">Order Number</span>
<span style="top:237px;font-size:14.5px;color:#bcbcbc;left:1184.03px;transform:scaleX(0.9691);transform-origin:0 0;">11073</span>
<span style="top:270px;font-size:14.5px;color:#fff;left:989.50px;transform:scaleX(0.9529);transform-origin:0 0;">Customer Company Name</span>
<span style="top:270px;font-size:14.5px;color:#bcbcbc;left:1184.08px;transform:scaleX(0.9153);transform-origin:0 0;">Pericles Comidas clásicas</span>
<span style="top:303px;font-size:14.5px;color:#fff;left:1049.90px;transform:scaleX(0.9481);transform-origin:0 0;">Customer Phone</span>
<span style="top:303px;font-size:14.5px;color:#bcbcbc;left:1185.00px;transform:scaleX(0.9378);transform-origin:0 0;">(5) 552-3745</span>
<span style="top:336px;font-size:14.5px;color:#fff;left:1013.00px;transform:scaleX(0.9446);transform-origin:0 0;">Customer Loyalty Card</span>
<span style="top:369px;font-size:14.5px;color:#fff;left:1022.66px;transform:scaleX(0.9407);transform-origin:0 0;">Employee Last Name</span>
<span style="top:369px;font-size:14.5px;color:#bcbcbc;left:1184.06px;transform:scaleX(0.9399);transform-origin:0 0;">Fuller</span>
<span style="top:402px;font-size:14.5px;color:#fff;left:1021.05px;transform:scaleX(0.9470);transform-origin:0 0;">Employee First Name</span>
<span style="top:402px;font-size:14.5px;color:#bcbcbc;left:1185.00px;transform:scaleX(0.9498);transform-origin:0 0;">Andrew</span>
<span style="top:435px;font-size:14.5px;color:#fff;left:1061.74px;transform:scaleX(0.9576);transform-origin:0 0;">Employee Title</span>
<span style="top:435px;font-size:14.5px;color:#bcbcbc;left:1185.00px;transform:scaleX(0.9133);transform-origin:0 0;">Vice President, Sales</span>
<span style="top:468px;font-size:14.5px;color:#fff;left:1084.30px;transform:scaleX(0.9587);transform-origin:0 0;">Order Date</span>
<span style="top:468px;font-size:14.5px;color:#bcbcbc;left:1185.00px;transform:scaleX(0.9715);transform-origin:0 0;">5/5/2019 10:45 AM</span>
<span style="top:818px;font-size:14.5px;color:#fff;left:1064.05px;transform:scaleX(0.9520);transform-origin:0 0;">Required Date</span>
<span style="top:818px;font-size:14.5px;color:#bcbcbc;left:1185.00px;transform:scaleX(0.9715);transform-origin:0 0;">6/2/2019 12:00 AM</span>
<span style="top:851px;font-size:14.5px;color:#fff;left:1069.20px;transform:scaleX(0.9544);transform-origin:0 0;">Shipped Date</span>
<span style="top:884px;font-size:14.5px;color:#fff;left:999.60px;transform:scaleX(0.9442);transform-origin:0 0;">Ship Via Company Name</span>
<span style="top:884px;font-size:14.5px;color:#bcbcbc;left:1184.06px;transform:scaleX(0.9397);transform-origin:0 0;">United Package</span>
<span style="top:917px;font-size:14.5px;color:#fff;left:1060.00px;transform:scaleX(0.9334);transform-origin:0 0;">Ship Via Phone</span>
<span style="top:917px;font-size:14.5px;color:#bcbcbc;left:1185.00px;transform:scaleX(0.9415);transform-origin:0 0;">(503) 555-3199</span>
<span style="top:950px;font-size:14.5px;color:#fff;left:1108.92px;transform:scaleX(0.9773);transform-origin:0 0;">Freight</span>
<span style="top:950px;font-size:14.5px;color:#bcbcbc;left:1185.00px;transform:scaleX(0.9100);transform-origin:0 0;">$24.95</span>
<span style="top:983px;font-size:14.5px;color:#fff;left:1084.00px;transform:scaleX(0.9650);transform-origin:0 0;">Order Total</span>
<span style="top:983px;font-size:14.5px;color:#bcbcbc;left:1185.00px;transform:scaleX(0.9093);transform-origin:0 0;">$324.95</span>
<span style="top:1016px;font-size:14.5px;color:#fff;left:1085.10px;transform:scaleX(0.9475);transform-origin:0 0;">Ship Name</span>
<span style="top:1016px;font-size:14.5px;color:#bcbcbc;left:1184.08px;transform:scaleX(0.9153);transform-origin:0 0;">Pericles Comidas clásicas</span>
<span style="top:1049px;font-size:14.5px;color:#fff;left:1072.30px;transform:scaleX(0.9385);transform-origin:0 0;">Ship Address</span>
<span style="top:1049px;font-size:14.5px;color:#bcbcbc;left:1185.00px;transform:scaleX(0.9133);transform-origin:0 0;">Calle Dr. Jorge Cash 321</span>
<span style="top:1082px;font-size:14.5px;color:#fff;left:1098.70px;transform:scaleX(0.9239);transform-origin:0 0;">Ship City</span>
<span style="top:1082px;font-size:14.5px;color:#bcbcbc;left:1184.04px;transform:scaleX(0.9606);transform-origin:0 0;">México D.F.</span>
<span style="top:509px;font-size:14.5px;color:#fff;left:969.60px;transform:scaleX(0.8590);transform-origin:0 0;">ORDER DETAILS (2)</span>
<span style="top:509px;font-size:14.5px;color:#fff;left:1232.00px;transform:scaleX(0.8843);transform-origin:0 0;">ACTIONS</span>
<span style="top:509px;font-size:14.5px;color:#fff;left:1327.19px;transform:scaleX(0.8094);transform-origin:0 0;">REPORT</span>
<span style="top:509px;font-size:14.5px;color:#fff;left:1470.40px;transform:scaleX(0.9011);transform-origin:0 0;">See All</span>
<span style="top:540px;font-size:14px;color:#8a8a8a;left:970.60px;transform:scaleX(0.9871);transform-origin:0 0;">This is a list of order details.</span>
<span style="top:574px;font-size:13px;color:#bdbdbd;left:986.47px;transform:scaleX(0.9284);transform-origin:0 0;">Product Name</span>
<span style="top:574px;font-size:13px;color:#bdbdbd;left:1108.46px;transform:scaleX(0.9391);transform-origin:0 0;">Product</span>
<span style="top:590px;font-size:13px;color:#bdbdbd;left:1108.46px;transform:scaleX(0.9391);transform-origin:0 0;">Barcode</span>
<span style="top:574px;font-size:13px;color:#bdbdbd;left:1208.46px;transform:scaleX(0.9391);transform-origin:0 0;">Product</span>
<span style="top:590px;font-size:13px;color:#bdbdbd;left:1209.40px;transform:scaleX(0.9391);transform-origin:0 0;">Category</span>
<span style="top:606px;font-size:13px;color:#bdbdbd;left:1208.46px;transform:scaleX(0.9391);transform-origin:0 0;">Name</span>
<span style="top:574px;font-size:13px;color:#bdbdbd;left:1286.06px;transform:scaleX(0.9391);transform-origin:0 0;">Product</span>
<span style="top:590px;font-size:13px;color:#bdbdbd;left:1287.00px;transform:scaleX(0.9391);transform-origin:0 0;">Supplier</span>
<span style="top:606px;font-size:13px;color:#bdbdbd;left:1287.00px;transform:scaleX(0.9391);transform-origin:0 0;">Company</span>
<span style="top:622px;font-size:13px;color:#bdbdbd;left:1286.06px;transform:scaleX(0.9391);transform-origin:0 0;">Name</span>
<span style="top:574px;font-size:13px;color:#bdbdbd;left:1397.48px;transform:scaleX(0.9180);transform-origin:0 0;">Unit Price</span>
<div style="left:0;top:0;width:1528px;height:1105px;overflow:hidden"><span style="top:574px;font-size:13px;color:#bdbdbd;left:1481.60px;transform:scaleX(0.9391);transform-origin:0 0;">Quantity</span></div>
<span style="top:664px;font-size:14.5px;color:#fff;left:987.40px;transform:scaleX(0.9168);transform-origin:0 0;">Queso</span>
<span style="top:683px;font-size:14.5px;color:#fff;left:987.40px;transform:scaleX(0.9104);transform-origin:0 0;">Cabrales</span>
<span style="top:673px;font-size:14.5px;color:#999;left:1109.40px;transform:scaleX(0.9482);transform-origin:0 0;">n/a</span>
<span style="top:664px;font-size:14.5px;color:#fff;left:1208.48px;transform:scaleX(0.9168);transform-origin:0 0;">Dairy</span>
<span style="top:683px;font-size:14.5px;color:#fff;left:1208.48px;transform:scaleX(0.9168);transform-origin:0 0;">Products</span>
<span style="top:654px;font-size:14.5px;color:#fff;left:1287.00px;transform:scaleX(0.9353);transform-origin:0 0;">Cooperativa</span>
<span style="top:673px;font-size:14.5px;color:#fff;left:1287.00px;transform:scaleX(0.9168);transform-origin:0 0;">de Quesos</span>
<span style="top:692px;font-size:14.5px;color:#fff;left:1287.00px;transform:scaleX(0.9168);transform-origin:0 0;">'Las Cabras'</span>
<span style="top:673px;font-size:14.5px;color:#fff;left:1409.00px;transform:scaleX(0.9032);transform-origin:0 0;">$21.00</span>
<div style="left:0;top:0;width:1528px;height:1105px;overflow:hidden"><span style="top:673px;font-size:14.5px;color:#fff;left:1512.08px;transform:scaleX(0.9168);transform-origin:0 0;">10</span></div>
<span style="top:736px;font-size:14.5px;color:#fff;left:987.40px;transform:scaleX(0.9168);transform-origin:0 0;">Guaraná</span>
<span style="top:755px;font-size:14.5px;color:#fff;left:986.48px;transform:scaleX(0.9168);transform-origin:0 0;">Fantástica</span>
<span style="top:745px;font-size:14.5px;color:#999;left:1109.40px;transform:scaleX(0.9482);transform-origin:0 0;">n/a</span>
<span style="top:745px;font-size:14.5px;color:#fff;left:1208.48px;transform:scaleX(0.9168);transform-origin:0 0;">Beverag...</span>
<span style="top:726px;font-size:14.5px;color:#fff;left:1286.08px;transform:scaleX(0.9168);transform-origin:0 0;">Refrescos</span>
<span style="top:745px;font-size:14.5px;color:#fff;left:1287.00px;transform:scaleX(0.9168);transform-origin:0 0;">Americanas</span>
<span style="top:764px;font-size:14.5px;color:#fff;left:1286.08px;transform:scaleX(0.9168);transform-origin:0 0;">LTDA</span>
<span style="top:745px;font-size:14.5px;color:#fff;right:100.94px;transform:scaleX(0.9168);transform-origin:100% 0;">$4.50</span>
<div style="left:0;top:0;width:1528px;height:1105px;overflow:hidden"><span style="top:745px;font-size:14.5px;color:#fff;left:1512.00px;transform:scaleX(0.9168);transform-origin:0 0;">20</span></div>
<div style="left:0px;top:1103px;width:1550px;height:2px;background:#0b0b0b;"></div>
<div style="left:335.2px;top:57px;width:218.5px;height:302px;background:#222;box-shadow:0 1px 4px rgba(0,0,0,.35)"></div>
<span style="top:70px;font-size:15px;color:#fff;left:362.00px;transform:scaleX(0.9164);transform-origin:0 0;">Customers</span>
<span style="top:113px;font-size:15px;color:#fff;left:361.08px;transform:scaleX(0.9161);transform-origin:0 0;">Employees</span>
<span style="top:156px;font-size:15px;color:#fff;left:391.68px;transform:scaleX(0.9200);transform-origin:0 0;">Employee Territories</span>
<span style="top:199px;font-size:15px;color:#fff;left:391.69px;transform:scaleX(0.9093);transform-origin:0 0;">Region</span>
<span style="top:242px;font-size:15px;color:#fff;left:392.60px;transform:scaleX(0.9243);transform-origin:0 0;">Territories</span>
<span style="top:285px;font-size:15px;color:#fff;left:362.00px;transform:scaleX(0.9097);transform-origin:0 0;">Shippers</span>
<span style="top:328px;font-size:15px;color:#fff;left:361.44px;transform:scaleX(0.9622);transform-origin:0 0;">Hello</span>
</div></body></html>
